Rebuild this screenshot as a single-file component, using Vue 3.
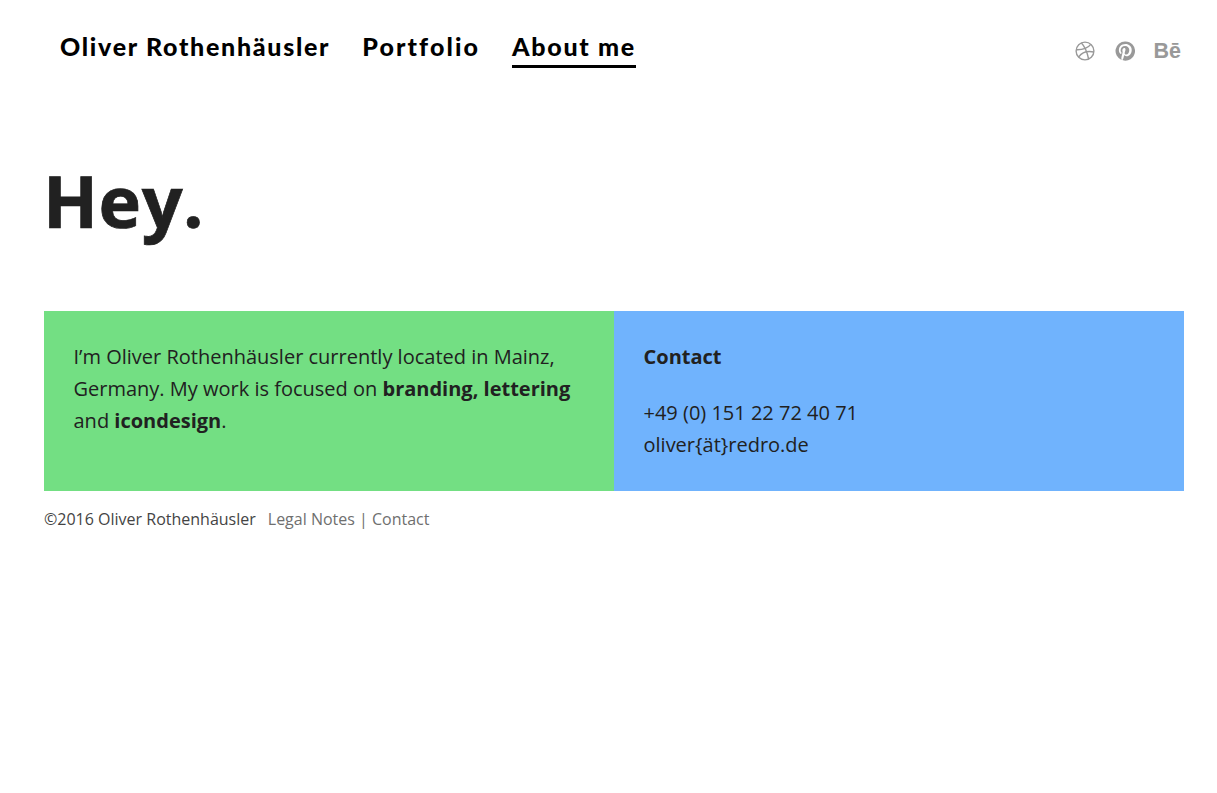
<script setup>
const links = [
  { label: 'Oliver Rothenhäusler', active: false },
  { label: 'Portfolio', active: false },
  { label: 'About me', active: true },
]
</script>

<template>
  <div class="page">
    <header class="top">
      <nav class="nav">
        <a v-for="link in links" :key="link.label" class="nav-link" :class="{ active: link.active }">{{ link.label }}</a>
      </nav>
      <div class="social">
        <svg class="dribbble" width="20" height="20" viewBox="0 0 20 20">
          <circle cx="10" cy="10" r="8.9" />
          <path d="M6.4 2C9 4.6 11.6 8.6 13.6 18" />
          <path d="M1.2 8.8C7 9 12.4 7.6 15.8 3.4" />
          <path d="M3.6 16.2C6.4 12 12 9.6 18.9 11" />
        </svg>
        <svg class="pinterest" width="20" height="20" viewBox="0 0 20 20">
          <path fill-rule="evenodd" d="M10 .4a9.6 9.6 0 0 0-3.5 18.5c-.1-.8-.2-1.9 0-2.8l1.2-5s-.3-.6-.3-1.5c0-1.4.8-2.5 1.8-2.5.9 0 1.3.6 1.3 1.4 0 .9-.5 2.1-.8 3.3-.2 1 .5 1.8 1.5 1.8 1.8 0 3.1-1.9 3.1-4.6 0-2.4-1.7-4.1-4.2-4.1-2.9 0-4.5 2.1-4.5 4.3 0 .9.3 1.8.8 2.3.1.1.1.2.1.3l-.3 1.2c0 .2-.1.2-.3.1-1.3-.6-2-2.4-2-3.9 0-3.2 2.3-6.1 6.6-6.1 3.5 0 6.2 2.5 6.2 5.8 0 3.5-2.2 6.3-5.2 6.3-1 0-2-.5-2.3-1.1l-.6 2.4c-.2.9-.8 2-1.2 2.6A9.6 9.6 0 1 0 10 .4z" />
        </svg>
        <span class="behance">Bē</span>
      </div>
    </header>

    <h1 class="title">Hey.</h1>

    <section class="panels">
      <div class="panel green">
        <p>I’m Oliver Rothenhäusler currently located in Mainz, Germany. My work is focused on <b>branding, lettering</b> and <b>icondesign</b>.</p>
      </div>
      <div class="panel blue">
        <p class="contact-head"><b>Contact</b></p>
        <p>+49 (0) 151 22 72 40 71<br />oliver{ät}redro.de</p>
      </div>
    </section>

    <footer class="foot">
      <span class="copy">©2016 Oliver Rothenhäusler</span>
      <span class="legal">Legal Notes | Contact</span>
    </footer>
  </div>
</template>

<style>
html,
body {
  background: #fff;
}
</style>

<style scoped>
.page {
  box-sizing: border-box;
  width: 1217px;
  height: 793px;
  padding: 0 33px 0 44px;
  font-family: "Open Sans", sans-serif;
  color: #212121;
  overflow: hidden;
}
.top {
  display: flex;
  justify-content: space-between;
  height: 68px;
  padding-top: 26px;
  box-sizing: border-box;
  margin-right: -30px;
}
.nav {
  display: flex;
  gap: 32px;
  padding-left: 16px;
}
.nav-link {
  box-sizing: border-box;
  height: 42px;
  font-family: Lato, "Open Sans", sans-serif;
  font-size: 25px;
  font-weight: 900;
  line-height: 40px;
  letter-spacing: 1.7px;
  color: #000;
}
.nav-link:nth-child(2) {
  letter-spacing: 2.1px;
}
.nav-link.active {
  border-bottom: 3px solid #000;
}
.social {
  display: flex;
  align-items: center;
  height: 50px;
  gap: 20px;
  padding-right: 33px;
}
.dribbble {
  fill: none;
  stroke: #999;
  stroke-width: 1.4;
}
.pinterest {
  fill: #999;
}
.behance {
  font-family: "Liberation Sans", sans-serif;
  font-size: 21.5px;
  font-weight: 700;
  line-height: 20px;
  color: #999;
  margin-left: -1.4px;
}
.title {
  margin: 0 0 0 -1px;
  padding-top: 80px;
  font-size: 72px;
  font-weight: 700;
  letter-spacing: 0.5px;
  -webkit-text-stroke: 0.7px #212121;
  line-height: 104px;
  height: 163px;
  color: #212121;
}
.panels {
  display: flex;
  width: 1140px;
  height: 180px;
}
.panel {
  box-sizing: border-box;
  width: 570px;
  padding: 30px 30px 30px 29.5px;
  font-size: 20px;
  line-height: 32px;
}
.panel p {
  margin: 0;
}
.contact-head {
  margin-bottom: 24px !important;
}
.green {
  background: #73df83;
}
.blue {
  background: #70b3fd;
}
.foot {
  display: flex;
  gap: 12px;
  padding-top: 16px;
  font-size: 16px;
  line-height: 24px;
}
.copy {
  color: #444;
}
.legal {
  color: #6f6f6f;
}
</style>
